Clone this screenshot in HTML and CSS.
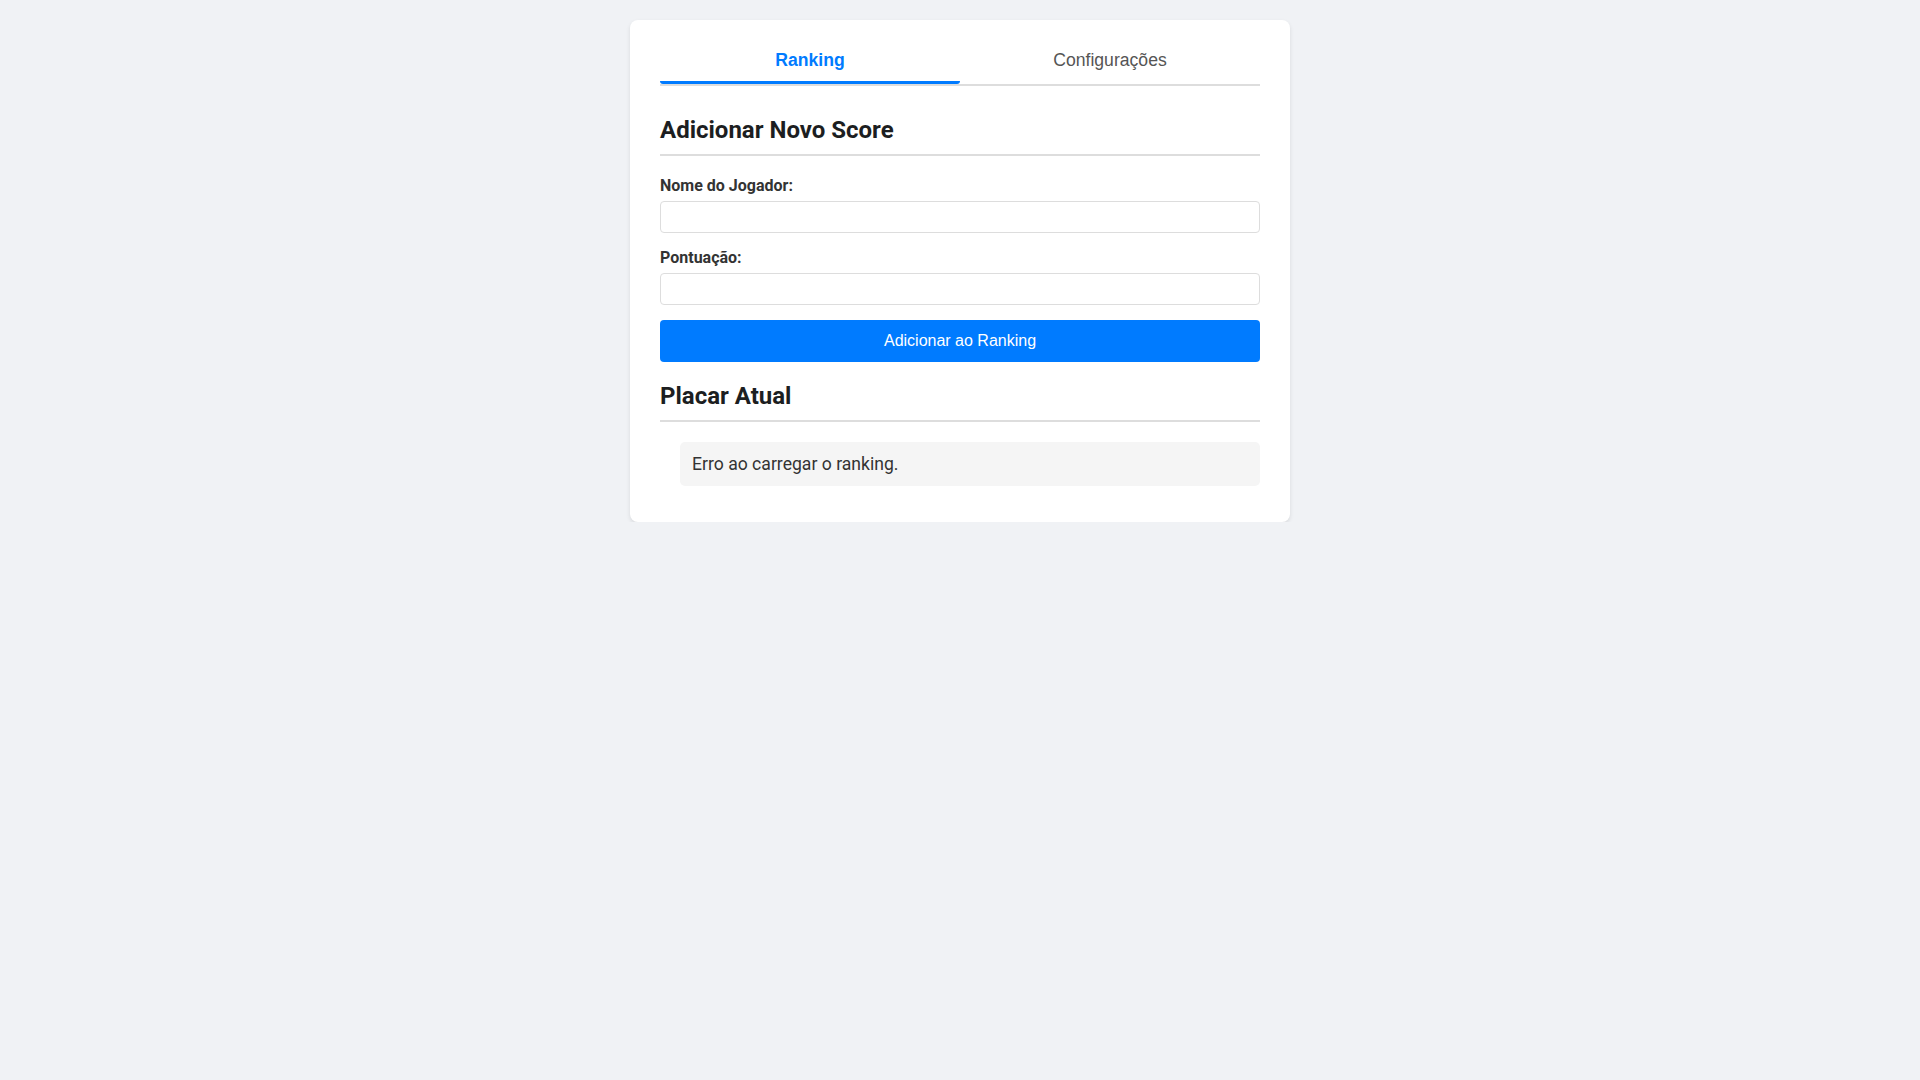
FILE: index.html
```html
<!DOCTYPE html>
<html lang="pt-BR">
<head>
<meta charset="UTF-8">
<title>Ranking</title>
<link rel="stylesheet" href="styles.css">
</head>
<body>
<div class="card">
  <div class="tabs">
    <button class="tab active">Ranking</button>
    <button class="tab">Configurações</button>
  </div>
  <h2 class="section-title">Adicionar Novo Score</h2>
  <form class="score-form">
    <div class="form-group">
      <label for="player">Nome do Jogador:</label>
      <input type="text" id="player">
    </div>
    <div class="form-group">
      <label for="score">Pontuação:</label>
      <input type="number" id="score">
    </div>
    <button type="button" class="btn-primary">Adicionar ao Ranking</button>
  </form>
  <h2 class="section-title">Placar Atual</h2>
  <ul class="ranking-list">
    <li>Erro ao carregar o ranking.</li>
  </ul>
</div>
</body>
</html>
```
FILE: styles.css
```css
* { box-sizing: border-box; }
html, body { margin: 0; padding: 0; }
body {
  background: #f0f2f5;
  font-family: Roboto, "Liberation Sans", Arial, sans-serif;
  color: #333;
  padding-top: 20px;
}
.card {
  width: 660px;
  margin: 0 auto;
  background: #fff;
  border-radius: 8px;
  box-shadow: 0 2px 4px rgba(0, 0, 0, 0.1);
  padding: 20px 30px;
}
.tabs {
  display: flex;
  border-bottom: 2px solid #ddd;
  margin-bottom: 30px;
}
.tab {
  flex: 1;
  font-family: "Liberation Sans", Arial, sans-serif;
  font-size: 17.6px;
  line-height: 21px;
  padding: 10px 0;
  background: none;
  border: none;
  border-bottom: 3px solid transparent;
  border-radius: 3px;
  color: #555;
  cursor: pointer;
}
.tab.active {
  color: #007bff;
  font-weight: bold;
  border-bottom-color: #007bff;
}
.section-title {
  font-size: 24px;
  font-weight: 700;
  color: #1c1e21;
  margin: 0 0 20px;
  padding-bottom: 10px;
  border-bottom: 2px solid #ddd;
}
.score-form { margin-bottom: 20px; }
.form-group { margin-bottom: 15px; }
.form-group label {
  display: block;
  font-weight: 700;
  font-size: 16px;
  line-height: 19px;
  margin-bottom: 6px;
  color: #333;
}
.form-group input {
  display: block;
  width: 100%;
  height: 32px;
  padding: 6px 8px;
  font-size: 16px;
  border: 1px solid #ddd;
  border-radius: 4px;
  background: #fff;
  outline: none;
}
.btn-primary {
  display: block;
  width: 100%;
  padding: 12px;
  font-family: "Liberation Sans", Arial, sans-serif;
  font-size: 16px;
  line-height: 18px;
  color: #fff;
  background: #007bff;
  border: none;
  border-radius: 4px;
  cursor: pointer;
}
.ranking-list {
  list-style: none;
  margin: 0 0 16px;
  padding: 0 0 0 20px;
}
.ranking-list li {
  background: #f5f5f5;
  border-radius: 5px;
  padding: 12px;
  font-size: 17.6px;
  line-height: 20px;
  color: #333;
}
```
